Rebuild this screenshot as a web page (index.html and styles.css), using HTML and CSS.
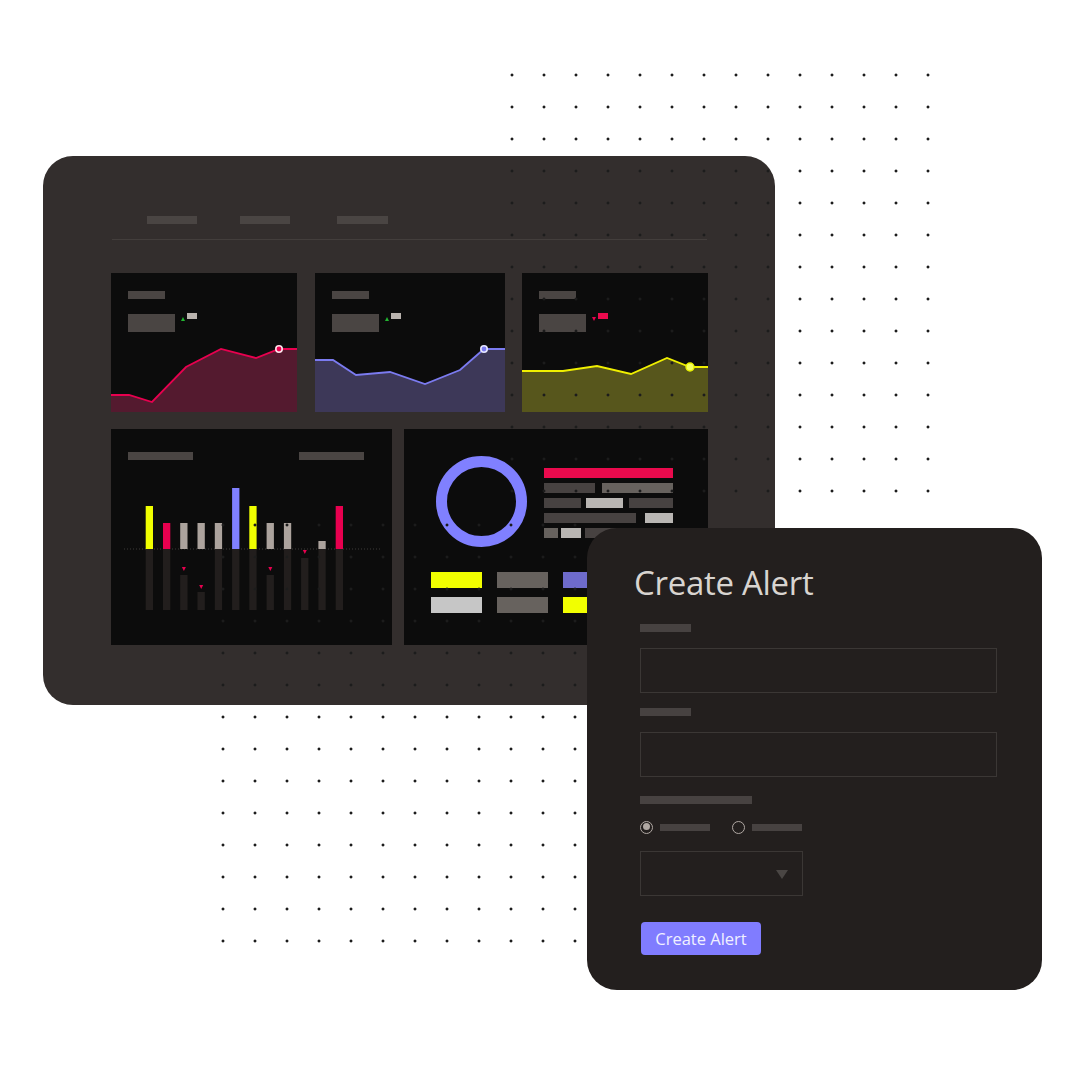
FILE: index.html
```html
<!DOCTYPE html>
<html lang="en">
<head>
<meta charset="utf-8">
<title>Create Alert</title>
<link rel="stylesheet" href="styles.css">
</head>
<body>
<div class="stage">
  <div class="dash">
    <div class="nav">
      <span class="nav-item"></span>
      <span class="nav-item"></span>
      <span class="nav-item third"></span>
    </div>
    <div class="divider"></div>

    <div class="row-top">
      <div class="card kpi">
        <div class="kpi-title"></div>
        <div class="kpi-value-row">
          <span class="kpi-value"></span>
          <span class="tri up"></span>
          <span class="kpi-delta"></span>
        </div>
        <svg class="spark" width="186" height="79" viewBox="0 0 186 79">
          <polygon class="fill-pink" points="0,62 18,62 41,69 75,34 110,16 145,25 168,16 186,16 186,79 0,79"/>
          <polyline class="line-pink" points="0,62 18,62 41,69 75,34 110,16 145,25 168,16 186,16"/>
          <circle cx="168" cy="16" r="3.2" fill="#e8004f" stroke="#ffe0ea" stroke-width="1.6"/>
        </svg>
      </div>
      <div class="card kpi">
        <div class="kpi-title"></div>
        <div class="kpi-value-row">
          <span class="kpi-value"></span>
          <span class="tri up"></span>
          <span class="kpi-delta"></span>
        </div>
        <svg class="spark" width="190" height="79" viewBox="0 0 190 79">
          <polygon class="fill-blue" points="0,27 18,27 41,42 75,39 110,51 145,37 169,16 190,16 190,79 0,79"/>
          <polyline class="line-blue" points="0,27 18,27 41,42 75,39 110,51 145,37 169,16 190,16"/>
          <circle cx="169" cy="16" r="3.2" fill="#7b7bf0" stroke="#e6e6ff" stroke-width="1.6"/>
        </svg>
      </div>
      <div class="card kpi">
        <div class="kpi-title"></div>
        <div class="kpi-value-row">
          <span class="kpi-value"></span>
          <span class="tri down"></span>
          <span class="kpi-delta neg"></span>
        </div>
        <svg class="spark" width="186" height="79" viewBox="0 0 186 79">
          <polygon class="fill-yellow" points="0,38 41,38 75,33 109,41 145,25 168,34 186,34 186,79 0,79"/>
          <polyline class="line-yellow" points="0,38 41,38 75,33 109,41 145,25 168,34 186,34"/>
          <circle cx="168" cy="34" r="4" fill="#f4ff60" stroke="#e6f000" stroke-width="1.4"/>
        </svg>
      </div>
    </div>

    <div class="row-bottom">
      <div class="card bars-card">
        <div class="bars-head">
          <span class="ph-title"></span>
          <span class="ph-title"></span>
        </div>
        <svg class="bars" width="281" height="140" viewBox="0 0 281 140">
          <line x1="13" y1="70" x2="269" y2="70" stroke="#3c3a39" stroke-width="1" stroke-dasharray="1 2"/>
          <g fill="#221e1d">
            <rect x="34.7" y="70" width="7.3" height="61"/>
            <rect x="52.0" y="70" width="7.3" height="61"/>
            <rect x="69.2" y="96" width="7.3" height="35"/>
            <rect x="86.5" y="113" width="7.3" height="18"/>
            <rect x="103.8" y="70" width="7.3" height="61"/>
            <rect x="121.1" y="70" width="7.3" height="61"/>
            <rect x="138.3" y="70" width="7.3" height="61"/>
            <rect x="155.6" y="96" width="7.3" height="35"/>
            <rect x="172.9" y="70" width="7.3" height="61"/>
            <rect x="190.1" y="79" width="7.3" height="52"/>
            <rect x="207.4" y="70" width="7.3" height="61"/>
            <rect x="224.7" y="70" width="7.3" height="61"/>
          </g>
          <rect x="34.7" y="27" width="7.3" height="43" fill="#f0ff00"/>
          <rect x="52.0" y="44" width="7.3" height="26" fill="#e8004f"/>
          <rect x="69.2" y="44" width="7.3" height="26" fill="#aca39d"/>
          <rect x="86.5" y="44" width="7.3" height="26" fill="#aca39d"/>
          <rect x="103.8" y="44" width="7.3" height="26" fill="#aca39d"/>
          <rect x="121.1" y="9" width="7.3" height="61" fill="#8080ff"/>
          <rect x="138.3" y="27" width="7.3" height="43" fill="#f0ff00"/>
          <rect x="155.6" y="44" width="7.3" height="26" fill="#aca39d"/>
          <rect x="172.9" y="44" width="7.3" height="26" fill="#aca39d"/>
          <rect x="207.4" y="62" width="7.3" height="8" fill="#aca39d"/>
          <rect x="224.7" y="27" width="7.3" height="43" fill="#e8004f"/>
          <g fill="#e8004f">
            <polygon points="70.9,88 74.9,88 72.9,92"/>
            <polygon points="88.2,106 92.2,106 90.2,110"/>
            <polygon points="157.3,88 161.3,88 159.3,92"/>
            <polygon points="191.8,71 195.8,71 193.8,75"/>
          </g>
        </svg>
      </div>

      <div class="card donut-card">
        <div class="donut-top">
          <svg class="donut" width="91" height="91" viewBox="0 0 91 91">
            <circle cx="45.5" cy="45.5" r="40" fill="none" stroke="#8080ff" stroke-width="11"/>
          </svg>
          <div class="blocks">
            <div class="brow"><span class="b pink" style="width:129px"></span></div>
            <div class="brow"><span class="b dark" style="width:51px"></span><span class="b grey g7" style="width:71px"></span></div>
            <div class="brow"><span class="b dark" style="width:37px"></span><span class="b light g5" style="width:37px"></span><span class="b dark g6" style="width:44px"></span></div>
            <div class="brow"><span class="b dark" style="width:92px"></span><span class="b light g9" style="width:28px"></span></div>
            <div class="brow"><span class="b grey" style="width:14px"></span><span class="b light g3" style="width:20px"></span><span class="b dark g4" style="width:40px"></span></div>
          </div>
        </div>
        <div class="legend">
          <span class="lg yellow"></span>
          <span class="lg grey"></span>
          <span class="lg purple"></span>
          <span class="lg light"></span>
          <span class="lg grey"></span>
          <span class="lg yellow"></span>
        </div>
      </div>
    </div>
  </div>

  <div class="dots dots-tr"></div>
  <div class="dots dots-bl"></div>

  <div class="alert">
    <h1 class="alert-title">Create Alert</h1>
    <div class="ph-label first"></div>
    <div class="field"></div>
    <div class="ph-label"></div>
    <div class="field"></div>
    <div class="ph-label long"></div>
    <div class="radios">
      <span class="radio checked"></span>
      <span class="radio-label"></span>
      <span class="radio second"></span>
      <span class="radio-label"></span>
    </div>
    <div class="select"><span class="caret"></span></div>
    <button class="btn" type="button">Create Alert</button>
  </div>
</div>
</body>
</html>
```

FILE: styles.css
```css
html, body {
  margin: 0;
  padding: 0;
  background: #ffffff;
}

body {
  font-family: "Open Sans", "Noto Sans", "Liberation Sans", sans-serif;
}

.stage {
  position: relative;
  width: 1080px;
  height: 1080px;
  overflow: hidden;
  background: #ffffff;
}

/* ---------- dashboard window ---------- */
.dash {
  position: absolute;
  left: 43px;
  top: 156px;
  width: 732px;
  height: 549px;
  box-sizing: border-box;
  padding: 60px 67px 0 68px;
  background: #332e2d;
  border-radius: 30px;
}

.nav {
  display: flex;
  gap: 43px;
  padding-left: 36px;
}

.nav-item {
  display: block;
  width: 50px;
  height: 8px;
  background: #4a4543;
}

.nav-item.third {
  margin-left: 4px;
  width: 51px;
}

.divider {
  margin: 15px 1px 0 1px;
  height: 1px;
  background: #433e3c;
}

.card {
  background: #0c0c0c;
}

.row-top {
  margin-top: 33px;
  display: grid;
  grid-template-columns: 186px 190px 186px;
  justify-content: space-between;
}

.kpi {
  height: 139px;
  box-sizing: border-box;
  padding-top: 18px;
  display: flex;
  flex-direction: column;
  overflow: hidden;
}

.kpi-title {
  margin-left: 17px;
  width: 37px;
  height: 8px;
  background: #4a4543;
}

.kpi-value-row {
  margin: 15px 0 0 17px;
  display: flex;
  align-items: flex-start;
  height: 18px;
}

.kpi-value {
  width: 47px;
  height: 18px;
  background: #4a4543;
}

.tri {
  width: 0;
  height: 0;
  margin: 3px 2px 0 6px;
  border-left: 2.5px solid transparent;
  border-right: 2.5px solid transparent;
}

.tri.up {
  border-bottom: 4px solid #22b531;
}

.tri.down {
  border-top: 4px solid #e8004f;
}

.kpi-delta {
  width: 10px;
  height: 6px;
  margin-top: -1px;
  background: #b9b3ae;
}

.kpi-delta.neg {
  background: #ea0a4d;
}

.spark {
  display: block;
  margin-top: auto;
}

.fill-pink { fill: #541a2f; }
.line-pink { fill: none; stroke: #e8004f; stroke-width: 1.8; }
.fill-blue { fill: #3d3858; }
.line-blue { fill: none; stroke: #7b7bf0; stroke-width: 1.8; }
.fill-yellow { fill: #57561c; }
.line-yellow { fill: none; stroke: #f0f000; stroke-width: 1.8; }

.row-bottom {
  margin-top: 17px;
  display: grid;
  grid-template-columns: 281px 304px;
  justify-content: space-between;
}

.bars-card {
  height: 216px;
  box-sizing: border-box;
  padding-top: 23px;
}

.bars-head {
  display: flex;
  justify-content: space-between;
  padding: 0 28px 0 17px;
}

.ph-title {
  display: block;
  width: 65px;
  height: 8px;
  background: #4a4543;
}

.bars {
  display: block;
  margin-top: 19px;
}

.donut-card {
  height: 216px;
  box-sizing: border-box;
  padding: 27px 0 0 27px;
  overflow: hidden;
}

.donut-top {
  display: flex;
  align-items: flex-start;
}

.donut {
  display: block;
  margin-left: 4.5px;
}

.blocks {
  margin: 12px 0 0 17.5px;
  display: flex;
  flex-direction: column;
  gap: 5px;
}

.brow {
  display: flex;
  height: 10px;
}

.b {
  display: block;
  height: 10px;
}

.b.pink { background: #ea0a4d; }
.b.dark { background: #474241; }
.b.grey { background: #67625e; }
.b.light { background: #b9b6b3; }
.g3 { margin-left: 3px; }
.g4 { margin-left: 4px; }
.g5 { margin-left: 5px; }
.g6 { margin-left: 6px; }
.g7 { margin-left: 7px; }
.g9 { margin-left: 9px; }

.legend {
  margin-top: 24.5px;
  display: grid;
  grid-template-columns: repeat(3, 51px);
  column-gap: 15px;
  row-gap: 9px;
}

.lg {
  display: block;
  height: 16px;
}

.lg.yellow { background: #f2ff00; }
.lg.grey { background: #67625e; }
.lg.purple { background: #6e6bcc; }
.lg.light { background: #c6c6c6; }

/* ---------- dotted decoration ---------- */
.dots {
  position: absolute;
  background-image: radial-gradient(circle at 16px 16px, #1c1c1c 0, #1c1c1c 1.1px, rgba(28, 28, 28, 0) 1.8px);
  background-size: 32px 32px;
  pointer-events: none;
}

.dots-tr {
  left: 496px;
  top: 59px;
  width: 448px;
  height: 448px;
}

.dots-bl {
  left: 207px;
  top: 509px;
  width: 384px;
  height: 448px;
}

/* ---------- create alert window ---------- */
.alert {
  position: absolute;
  left: 587px;
  top: 528px;
  width: 455px;
  height: 462px;
  box-sizing: border-box;
  padding: 35px 45px 0 53px;
  background: #231f1e;
  border-radius: 30px;
}

.alert-title {
  margin: 0;
  font-size: 33px;
  line-height: 40px;
  font-weight: 400;
  letter-spacing: -0.3px;
  color: #d8d4d0;
  margin-left: -6px;
}

.ph-label {
  width: 51px;
  height: 8px;
  margin-top: 15px;
  background: #474241;
}

.ph-label.first {
  margin-top: 21px;
}

.ph-label.long {
  width: 112px;
  margin-top: 19px;
}

.field {
  margin-top: 16px;
  height: 45px;
  box-sizing: border-box;
  border: 1px solid #3b3735;
}

.radios {
  margin-top: 16px;
  display: flex;
  align-items: center;
  height: 14px;
}

.radio {
  width: 13px;
  height: 13px;
  box-sizing: border-box;
  border: 1.5px solid #b0a8a3;
  border-radius: 50%;
  position: relative;
}

.radio.checked::after {
  content: "";
  position: absolute;
  left: 1.5px;
  top: 1.5px;
  width: 7px;
  height: 7px;
  border-radius: 50%;
  background: #b0a8a3;
}

.radio.second {
  margin-left: 22px;
}

.radio-label {
  width: 50px;
  height: 7px;
  margin-left: 7px;
  background: #474241;
}

.select {
  margin-top: 17px;
  width: 163px;
  height: 45px;
  box-sizing: border-box;
  border: 1px solid #3b3735;
  display: flex;
  align-items: center;
  justify-content: flex-end;
  padding-right: 14px;
}

.caret {
  width: 0;
  height: 0;
  border-left: 6px solid transparent;
  border-right: 6px solid transparent;
  border-top: 9px solid #4a4644;
  margin-top: 1px;
}

.btn {
  display: block;
  margin-top: 26px;
  margin-left: 1px;
  width: 120px;
  height: 33px;
  padding: 0;
  border: 0;
  border-radius: 4px;
  background: #807cff;
  color: #f0f0ff;
  font-family: "Open Sans", "Noto Sans", "Liberation Sans", sans-serif;
  font-size: 16.5px;
  line-height: 33px;
  text-align: center;
}
```
